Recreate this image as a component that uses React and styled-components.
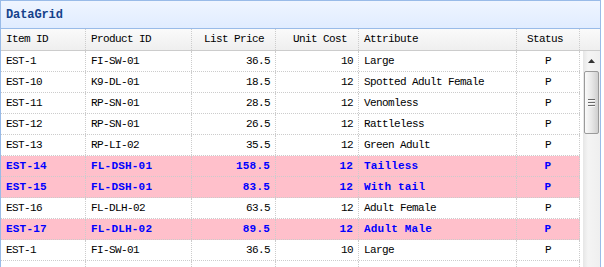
import React from 'react';
import styled, { createGlobalStyle } from 'styled-components';

const GlobalStyle = createGlobalStyle`
    html, body {
        margin: 0;
        padding: 0;
        background: #ffffff;
    }
    body {
        font-family: "Liberation Mono", "DejaVu Sans Mono", monospace;
        font-size: 11px;
    }
`;

const columns = [
    { key: 'itemid', title: 'Item ID', width: 85, align: 'left' },
    { key: 'productid', title: 'Product ID', width: 106, align: 'left' },
    { key: 'listprice', title: 'List Price', width: 84, align: 'right' },
    { key: 'unitcost', title: 'Unit Cost', width: 83, align: 'right' },
    { key: 'attr', title: 'Attribute', width: 158, align: 'left' },
    { key: 'status', title: 'Status', width: 63, align: 'center' },
];

const rows = [
    { itemid: 'EST-1', productid: 'FI-SW-01', listprice: '36.5', unitcost: '10', attr: 'Large', status: 'P' },
    { itemid: 'EST-10', productid: 'K9-DL-01', listprice: '18.5', unitcost: '12', attr: 'Spotted Adult Female', status: 'P' },
    { itemid: 'EST-11', productid: 'RP-SN-01', listprice: '28.5', unitcost: '12', attr: 'Venomless', status: 'P' },
    { itemid: 'EST-12', productid: 'RP-SN-01', listprice: '26.5', unitcost: '12', attr: 'Rattleless', status: 'P' },
    { itemid: 'EST-13', productid: 'RP-LI-02', listprice: '35.5', unitcost: '12', attr: 'Green Adult', status: 'P' },
    { itemid: 'EST-14', productid: 'FL-DSH-01', listprice: '158.5', unitcost: '12', attr: 'Tailless', status: 'P' },
    { itemid: 'EST-15', productid: 'FL-DSH-01', listprice: '83.5', unitcost: '12', attr: 'With tail', status: 'P' },
    { itemid: 'EST-16', productid: 'FL-DLH-02', listprice: '63.5', unitcost: '12', attr: 'Adult Female', status: 'P' },
    { itemid: 'EST-17', productid: 'FL-DLH-02', listprice: '89.5', unitcost: '12', attr: 'Adult Male', status: 'P' },
    { itemid: 'EST-1', productid: 'FI-SW-01', listprice: '36.5', unitcost: '10', attr: 'Large', status: 'P' },
    // next row only shows its borders above the fold
    { itemid: '', productid: '', listprice: '', unitcost: '', attr: '', status: '' },
];

// rows with list price above 80 get the pink style
const isHot = (row) => parseFloat(row.listprice) > 80;

export default function App() {
    return (
        <>
            <GlobalStyle />
            <Panel>
                <PanelHeader>
                    <PanelTitle>DataGrid</PanelTitle>
                </PanelHeader>
                <HeaderRow>
                    {columns.map((col) => (
                        <HeaderCell key={col.key} $width={col.width} $align={col.align}>
                            {col.title}
                            {col.align !== 'left' && <SortIcon />}
                        </HeaderCell>
                    ))}
                    <HeaderFiller />
                </HeaderRow>
                <Body>
                    <Rows>
                        {rows.map((row, i) => (
                            <Row key={i} $hot={isHot(row)}>
                                {columns.map((col) => (
                                    <Cell key={col.key} $width={col.width} $align={col.align} $hot={isHot(row)}>
                                        {row[col.key]}
                                    </Cell>
                                ))}
                            </Row>
                        ))}
                    </Rows>
                    <ScrollBar>
                        <ScrollArrow>
                            <svg width="7" height="4" viewBox="0 0 7 4">
                                <path d="M3.5 0 L7 4 L0 4 Z" fill="#333" />
                            </svg>
                        </ScrollArrow>
                        <ScrollThumb>
                            <Grip />
                            <Grip />
                            <Grip />
                        </ScrollThumb>
                    </ScrollBar>
                </Body>
            </Panel>
        </>
    );
}

const Panel = styled.div`
    width: 601px;
    height: 267px;
    border: 1px solid #99bbe8;
    border-bottom: none;
    box-sizing: border-box;
    display: flex;
    flex-direction: column;
    overflow: hidden;
`;

const PanelHeader = styled.div`
    height: 28px;
    flex: none;
    box-sizing: border-box;
    border-bottom: 1px solid #99bbe8;
    background: linear-gradient(to bottom, #eff5ff 0, #e0ecff 100%);
    display: flex;
    align-items: center;
    padding-left: 5px;
`;

const PanelTitle = styled.span`
    font-family: "Liberation Mono", "DejaVu Sans Mono", monospace;
    font-size: 12px;
    font-weight: bold;
    letter-spacing: -0.1px;
    color: #15428b;
`;

const HeaderRow = styled.div`
    display: flex;
    height: 22px;
    flex: none;
    box-sizing: border-box;
    border-bottom: 1px solid #cccccc;
    background: linear-gradient(to bottom, #fafafa 0, #efefef 100%);
`;

const HeaderCell = styled.div`
    width: ${({ $width }) => $width}px;
    flex: none;
    box-sizing: border-box;
    border-right: 1px dotted #cccccc;
    padding: 0 5px 0 5px;
    line-height: 21px;
    text-align: ${({ $align }) => $align};
    color: #000000;
    letter-spacing: -0.6px;
    white-space: nowrap;
`;

const SortIcon = styled.span`
    display: inline-block;
    width: 6px;
`;

const HeaderFiller = styled.div`
    flex: 1;
`;

const Body = styled.div`
    display: flex;
    flex: 1;
    min-height: 0;
`;

const Rows = styled.div`
    width: 579px;
    flex: none;
    display: flex;
    flex-direction: column;
`;

const Row = styled.div`
    display: flex;
    height: 21px;
    flex: none;
    box-sizing: border-box;
    border-bottom: 1px dotted #cccccc;
    background: ${({ $hot }) => ($hot ? '#ffc0cb' : '#ffffff')};
`;

const Cell = styled.div`
    width: ${({ $width }) => $width}px;
    flex: none;
    box-sizing: border-box;
    border-right: 1px dotted #cccccc;
    padding: 0 5px;
    line-height: 20px;
    text-align: ${({ $align }) => $align};
    white-space: nowrap;
    overflow: hidden;
    color: ${({ $hot }) => ($hot ? '#0000ff' : '#000000')};
    font-weight: ${({ $hot }) => ($hot ? 'bold' : 'normal')};
    letter-spacing: ${({ $hot }) => ($hot ? '0.2px' : '-0.6px')};
`;

const ScrollBar = styled.div`
    width: 17px;
    flex: none;
    margin-left: 3px;
    background: linear-gradient(to right, #e6e6e6 0, #f4f4f4 30%, #efefef 100%);
    display: flex;
    flex-direction: column;
    align-items: center;
`;

const ScrollArrow = styled.div`
    width: 17px;
    height: 19px;
    flex: none;
    display: flex;
    align-items: center;
    justify-content: center;
`;

const ScrollThumb = styled.div`
    width: 15px;
    height: 63px;
    margin-top: 1px;
    box-sizing: border-box;
    border: 1px solid #9a9a9a;
    border-radius: 2px;
    background: linear-gradient(to right, #fafafa 0, #e8e8e8 50%, #cfcfcf 100%);
    display: flex;
    flex-direction: column;
    align-items: center;
    justify-content: center;
    gap: 1px;
`;

const Grip = styled.div`
    width: 7px;
    height: 1px;
    background: #6a6a6a;
    border-bottom: 1px solid #f8f8f8;
`;
